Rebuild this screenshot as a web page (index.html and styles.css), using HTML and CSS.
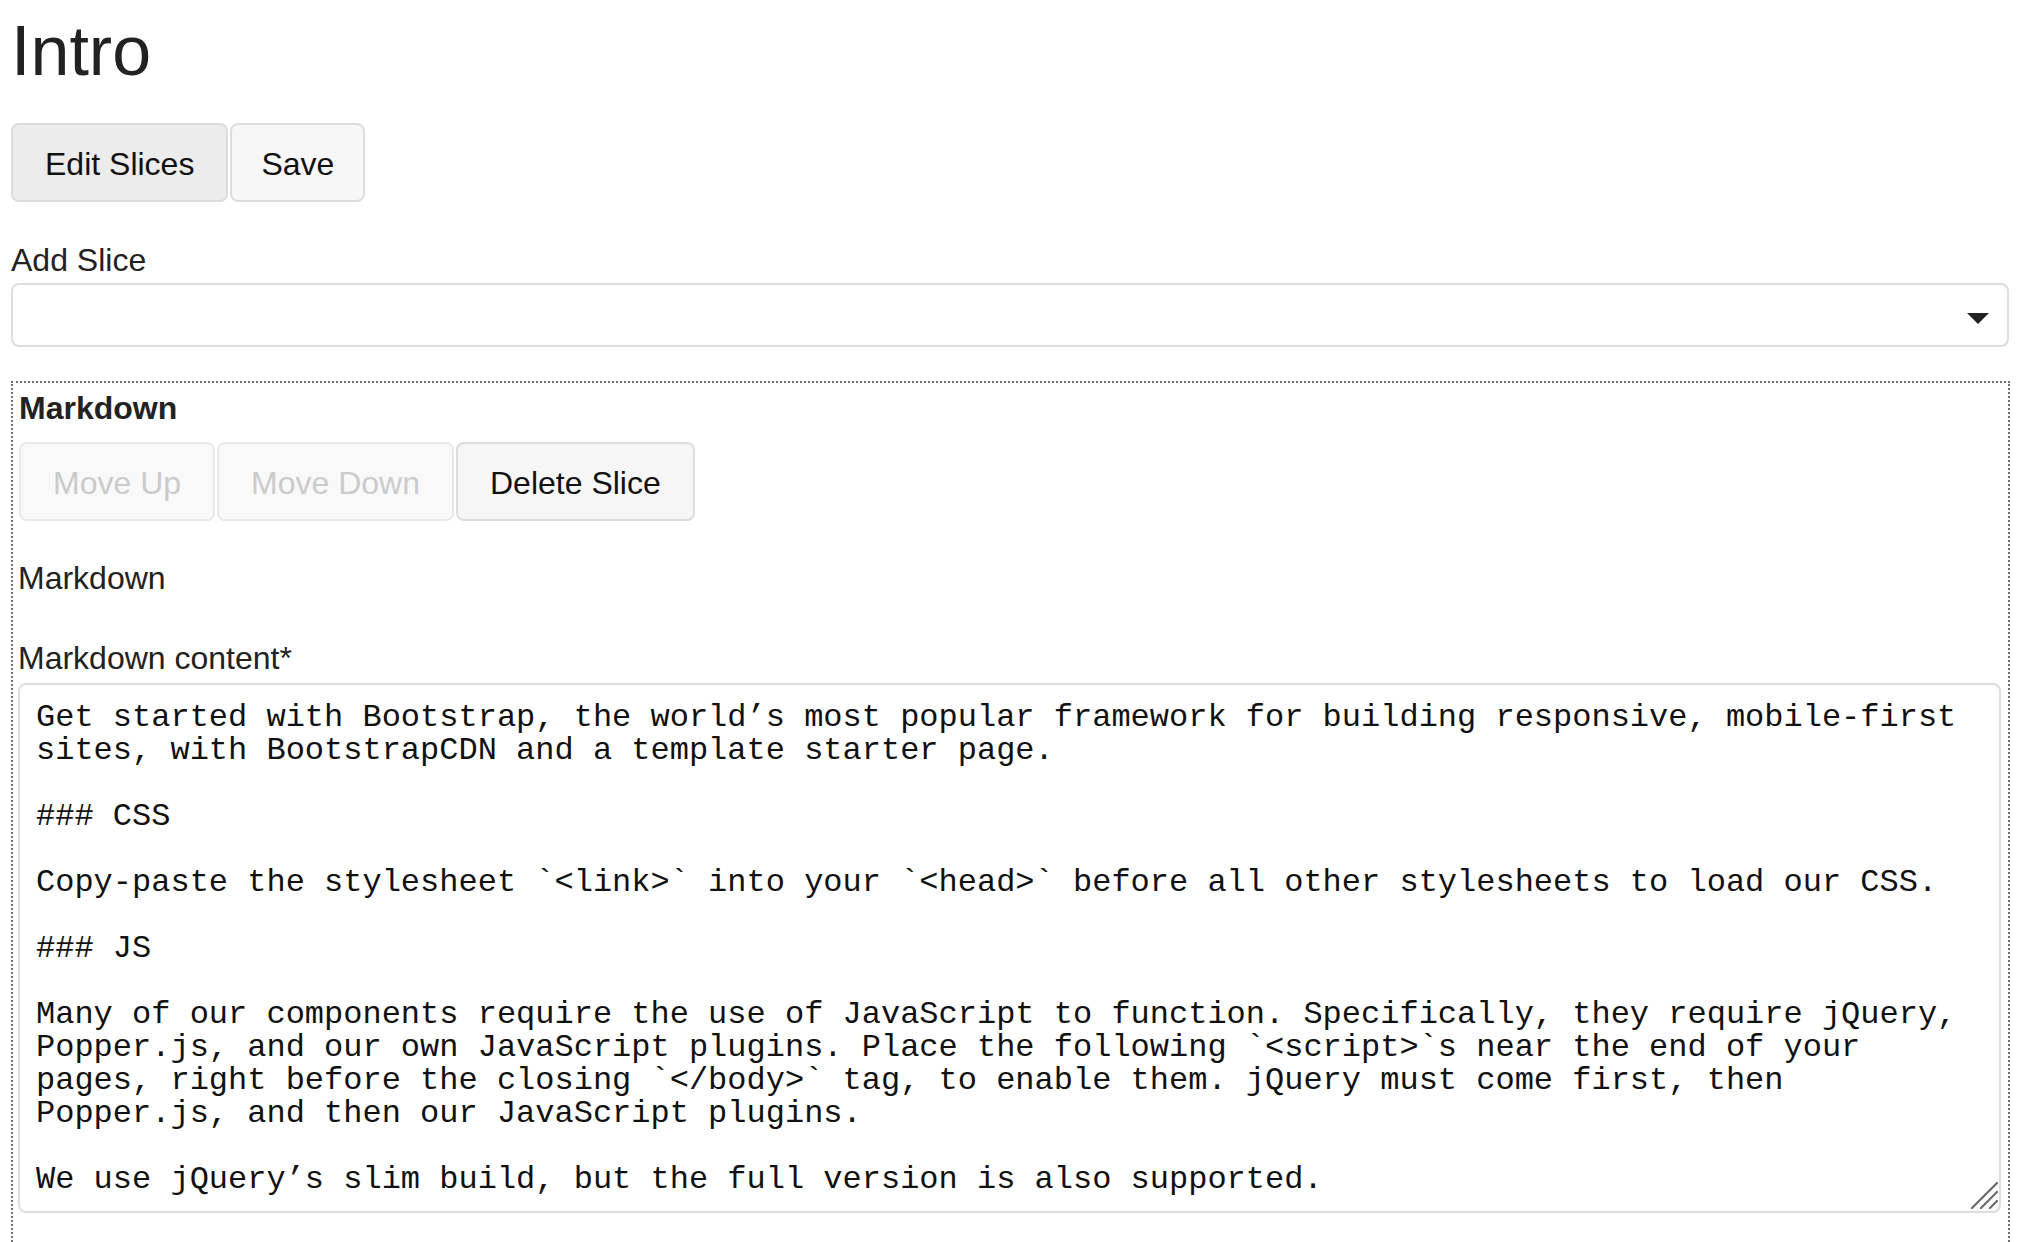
FILE: index.html
```html
<!DOCTYPE html>
<html lang="en">
<head>
<meta charset="utf-8">
<title>Intro</title>
<link rel="stylesheet" href="styles.css">
</head>
<body>
<div class="page">
  <h1 class="title">Intro</h1>
  <div class="btn-row top-actions">
    <button class="btn btn-active">Edit Slices</button>
    <button class="btn btn-save">Save</button>
  </div>
  <label class="field-label add-label">Add Slice</label>
  <div class="fake-select">
    <svg class="caret" width="22" height="11" viewBox="0 0 22 11"><path d="M0 0 L22 0 L11 11 Z" fill="#222"/></svg>
  </div>
  <div class="slice">
    <div class="slice-title">Markdown</div>
    <div class="btn-row slice-actions">
      <button class="btn btn-disabled" disabled>Move Up</button>
      <button class="btn btn-disabled" disabled>Move Down</button>
      <button class="btn btn-delete">Delete Slice</button>
    </div>
    <div class="slice-type">Markdown</div>
    <label class="field-label content-label">Markdown content*</label>
    <div class="area-wrap">
      <textarea class="md-area" spellcheck="false">Get started with Bootstrap, the world’s most popular framework for building responsive, mobile-first sites, with BootstrapCDN and a template starter page.

### CSS

Copy-paste the stylesheet `&lt;link&gt;` into your `&lt;head&gt;` before all other stylesheets to load our CSS.

### JS

Many of our components require the use of JavaScript to function. Specifically, they require jQuery, Popper.js, and our own JavaScript plugins. Place the following `&lt;script&gt;`s near the end of your pages, right before the closing `&lt;/body&gt;` tag, to enable them. jQuery must come first, then Popper.js, and then our JavaScript plugins.

We use jQuery’s slim build, but the full version is also supported.</textarea>
      <svg class="grip" width="28" height="28" viewBox="0 0 28 28"><g stroke="#6a6a6a" stroke-width="2.2" stroke-linecap="round"><path d="M2 27 L27 2"/><path d="M11 27 L27 11"/><path d="M20 27 L27 20"/></g></svg>
    </div>
  </div>
</div>
</body>
</html>
```

FILE: styles.css
```css
html {
  overflow: hidden;
}
body {
  margin: 0;
  background: #fff;
  color: #222;
  font-family: "Liberation Sans", Arial, Helvetica, sans-serif;
  font-size: 32px;
}
.page {
  width: 1999px;
  margin-left: 11px;
  padding-top: 9px;
}
.title {
  margin: 0;
  font-size: 70px;
  font-weight: 400;
  line-height: 84px;
  color: #222;
}
.btn-row {
  display: flex;
  gap: 2px;
}
.top-actions {
  margin-top: 30px;
}
.btn {
  font-family: "Liberation Sans", Arial, Helvetica, sans-serif;
  font-size: 32px;
  line-height: 48px;
  height: 79px;
  padding: 15px 32px 12px;
  border: 2px solid #dcdcdc;
  border-radius: 8px;
  background: #f7f7f7;
  color: #111;
  box-sizing: border-box;
  margin: 0;
}
.btn-active {
  background: #ececec;
}
.btn-save {
  padding-left: 29px;
  padding-right: 29px;
}
.btn-disabled {
  background: #f9f9f9;
  border-color: #e8e8e8;
  color: #cbcbcb;
}
.btn-delete {
  background: #f6f6f6;
}
.field-label {
  display: block;
  line-height: 46px;
}
.add-label {
  margin-top: 35px;
}
.fake-select {
  width: 1998px;
  height: 64px;
  box-sizing: border-box;
  border: 2px solid #dedede;
  border-radius: 8px;
  display: flex;
  align-items: center;
  justify-content: flex-end;
  padding: 6px 18px 0 0;
}
.caret {
  display: block;
}
.slice {
  margin-top: 34px;
  border: 2px dotted #707070;
  border-bottom: none;
  padding: 1px 7px 80px 5px;
  box-sizing: border-box;
  width: 1999px;
}
.slice-title {
  font-weight: 700;
  line-height: 48px;
  padding-left: 1px;
}
.slice-actions {
  margin-top: 10px;
  padding-left: 1px;
}
.slice-type {
  margin-top: 33px;
  line-height: 48px;
}
.content-label {
  margin-top: 32px;
  line-height: 48px;
}
.area-wrap {
  position: relative;
  margin-top: 1px;
  width: 1983px;
}
.md-area {
  display: block;
  width: 1983px;
  height: 530px;
  box-sizing: border-box;
  border: 2px solid #dedede;
  border-radius: 8px;
  padding: 16px;
  font-family: "Liberation Mono", "Courier New", monospace;
  font-size: 32px;
  line-height: 33px;
  color: #111;
  overflow: hidden;
  resize: none;
  outline: none;
}
.grip {
  position: absolute;
  right: 3px;
  bottom: 4px;
  display: block;
}
```
